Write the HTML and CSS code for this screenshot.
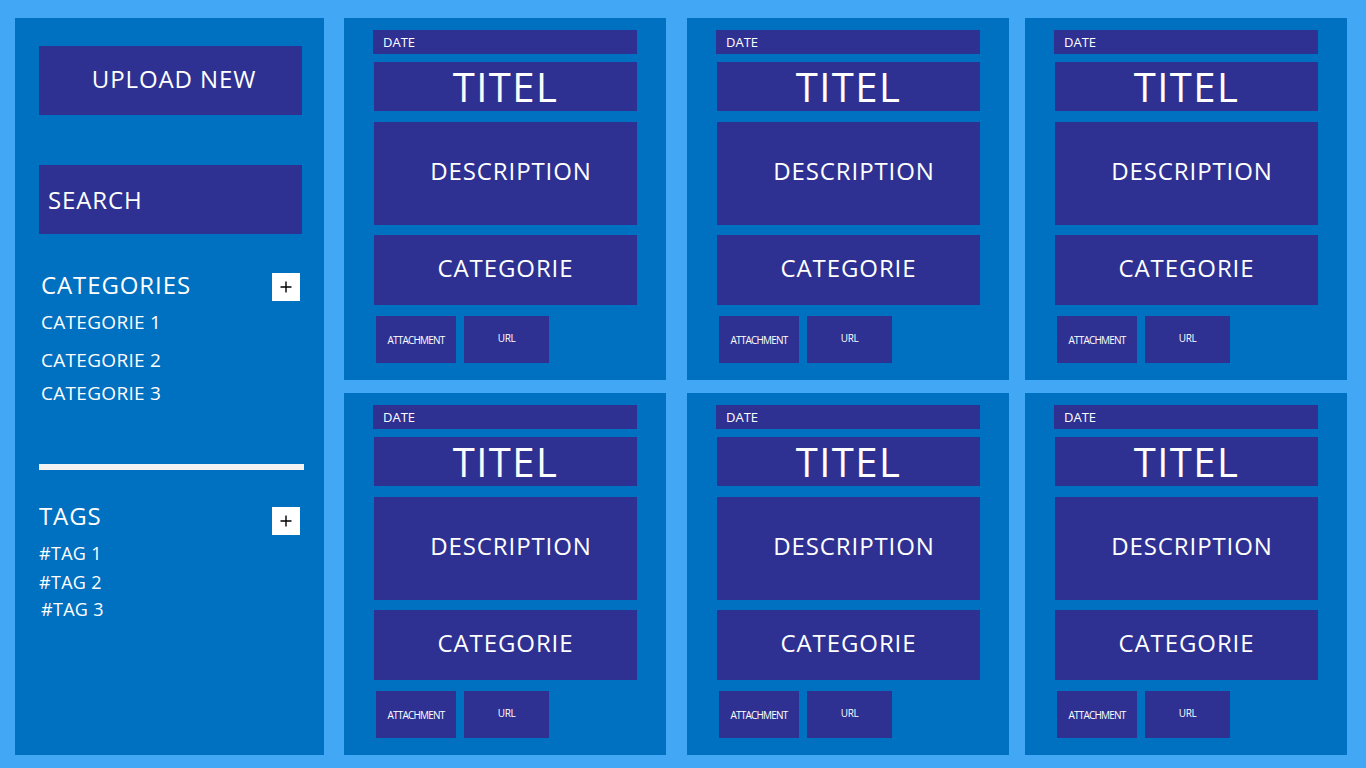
FILE: index.html
```html
<!DOCTYPE html>
<html lang="en">
<head>
<meta charset="utf-8">
<title>Notes board</title>
<link rel="stylesheet" href="styles.css">
</head>
<body>
<div class="page">
  <aside class="sidebar">
    <div class="side-btn side-btn--upload">UPLOAD NEW</div>
    <div class="side-btn side-btn--search">SEARCH</div>

    <section class="group group--cats">
      <div class="group-head">
        <span class="group-title">CATEGORIES</span>
        <span class="plus"><svg width="12" height="12" viewBox="0 0 12 12"><path d="M6 0.5V11.5M0.5 6H11.5" stroke="#000" stroke-width="1.4" fill="none"/></svg></span>
      </div>
      <ul class="cat-list">
        <li>CATEGORIE 1</li>
        <li>CATEGORIE 2</li>
        <li>CATEGORIE 3</li>
      </ul>
    </section>

    <hr class="divider">

    <section class="group group--tags">
      <div class="group-head">
        <span class="group-title">TAGS</span>
        <span class="plus plus--tags"><svg width="12" height="12" viewBox="0 0 12 12"><path d="M6 0.5V11.5M0.5 6H11.5" stroke="#000" stroke-width="1.4" fill="none"/></svg></span>
      </div>
      <ul class="tag-list">
        <li>#TAG 1</li>
        <li>#TAG 2</li>
        <li class="tag-indent">#TAG 3</li>
      </ul>
    </section>
  </aside>

  <main class="cards">
    <article class="card">
      <div class="card-date">DATE</div>
      <div class="card-title">TITEL</div>
      <div class="card-desc">DESCRIPTION</div>
      <div class="card-cat">CATEGORIE</div>
      <div class="card-actions"><span class="chip chip--att">ATTACHMENT</span><span class="chip chip--url">URL</span></div>
    </article>
    <article class="card">
      <div class="card-date">DATE</div>
      <div class="card-title">TITEL</div>
      <div class="card-desc">DESCRIPTION</div>
      <div class="card-cat">CATEGORIE</div>
      <div class="card-actions"><span class="chip chip--att">ATTACHMENT</span><span class="chip chip--url">URL</span></div>
    </article>
    <article class="card">
      <div class="card-date">DATE</div>
      <div class="card-title">TITEL</div>
      <div class="card-desc">DESCRIPTION</div>
      <div class="card-cat">CATEGORIE</div>
      <div class="card-actions"><span class="chip chip--att">ATTACHMENT</span><span class="chip chip--url">URL</span></div>
    </article>
    <article class="card">
      <div class="card-date">DATE</div>
      <div class="card-title">TITEL</div>
      <div class="card-desc">DESCRIPTION</div>
      <div class="card-cat">CATEGORIE</div>
      <div class="card-actions"><span class="chip chip--att">ATTACHMENT</span><span class="chip chip--url">URL</span></div>
    </article>
    <article class="card">
      <div class="card-date">DATE</div>
      <div class="card-title">TITEL</div>
      <div class="card-desc">DESCRIPTION</div>
      <div class="card-cat">CATEGORIE</div>
      <div class="card-actions"><span class="chip chip--att">ATTACHMENT</span><span class="chip chip--url">URL</span></div>
    </article>
    <article class="card">
      <div class="card-date">DATE</div>
      <div class="card-title">TITEL</div>
      <div class="card-desc">DESCRIPTION</div>
      <div class="card-cat">CATEGORIE</div>
      <div class="card-actions"><span class="chip chip--att">ATTACHMENT</span><span class="chip chip--url">URL</span></div>
    </article>
  </main>
</div>
</body>
</html>
```

FILE: styles.css
```css
* { box-sizing: border-box; }

html, body {
  margin: 0;
  padding: 0;
  background: #42a7f5;
  height: 768px;
  overflow: hidden;
}

body {
  font-family: "Open Sans", "Noto Sans", sans-serif;
  color: #ffffff;
}

.page {
  display: flex;
  align-items: flex-start;
  padding: 18px 0 0 15px;
}

/* ---------- sidebar ---------- */
.sidebar {
  width: 309px;
  height: 737px;
  background: #0070c0;
  padding: 28px 22px 0 24px;
}

.side-btn {
  height: 69px;
  background: #2e3192;
  display: flex;
  align-items: center;
  font-size: 24px;
  letter-spacing: 0.9px;
}

.side-btn--upload {
  justify-content: center;
  padding: 0 0 5px 7px;
}

.side-btn--search {
  margin-top: 50px;
  padding-left: 9px;
}

.group-head {
  display: flex;
  justify-content: space-between;
  align-items: flex-start;
  padding-right: 2px;
}

.group-title {
  font-size: 24px;
  line-height: 28px;
  letter-spacing: 0.9px;
}

.plus {
  width: 28px;
  height: 28px;
  background: #ffffff;
  display: flex;
  align-items: center;
  justify-content: center;
  margin-top: 2px;
}

.plus--tags { margin-top: 5px; }

.group--cats {
  margin-top: 37px;
}

.group--cats .group-head { padding-left: 2px; }

.cat-list, .tag-list {
  list-style: none;
  margin: 0;
  padding: 0;
}

.cat-list {
  margin-top: 9px;
  padding-left: 2px;
  font-size: 19px;
  line-height: 24px;
  letter-spacing: 0.3px;
}

.cat-list li:nth-child(2) { margin-top: 14px; }
.cat-list li:nth-child(3) { margin-top: 9px; }

.divider {
  border: 0;
  margin: 59px -2px 0 0;
  height: 6px;
  background: #f2f2f2;
}

.group--tags { margin-top: 32px; }

.tag-list {
  margin-top: 7px;
  font-size: 18px;
  line-height: 22px;
  letter-spacing: 0.3px;
}

.tag-list li:nth-child(2) { margin-top: 7px; }
.tag-list li:nth-child(3) { margin-top: 5px; }
.tag-indent { padding-left: 2px; }

/* ---------- cards ---------- */
.cards {
  margin-left: 20px;
  display: grid;
  grid-template-columns: 343px 338px 322px;
  row-gap: 13px;
}

.card {
  width: 322px;
  height: 362px;
  background: #0070c0;
  padding: 12px 0 0 29px;
}

.card-date {
  width: 264px;
  height: 24px;
  background: #2e3192;
  font-size: 13px;
  line-height: 24px;
  padding-left: 10px;
}

.card-title {
  margin: 8px 0 0 1px;
  width: 263px;
  height: 49px;
  background: #2e3192;
  font-size: 40px;
  line-height: 49px;
  text-align: center;
  letter-spacing: 1.4px;
}

.card-desc,
.card-cat {
  margin-left: 1px;
  width: 263px;
  background: #2e3192;
  display: flex;
  align-items: center;
  justify-content: center;
  font-size: 24px;
  letter-spacing: 0.9px;
}

.card-desc {
  margin-top: 11px;
  height: 103px;
  padding: 0 0 6px 11px;
}

.card-cat {
  margin-top: 10px;
  height: 70px;
  padding-bottom: 6px;
}

.card-actions {
  margin: 11px 0 0 3px;
  display: flex;
  gap: 8px;
}

.chip {
  height: 47px;
  background: #2e3192;
  display: flex;
  align-items: center;
  justify-content: center;
  font-size: 10px;
  letter-spacing: -0.8px;
}

.chip--att { width: 80px; }
.chip--url { width: 85px; padding-bottom: 4px; letter-spacing: -0.4px; }
```
